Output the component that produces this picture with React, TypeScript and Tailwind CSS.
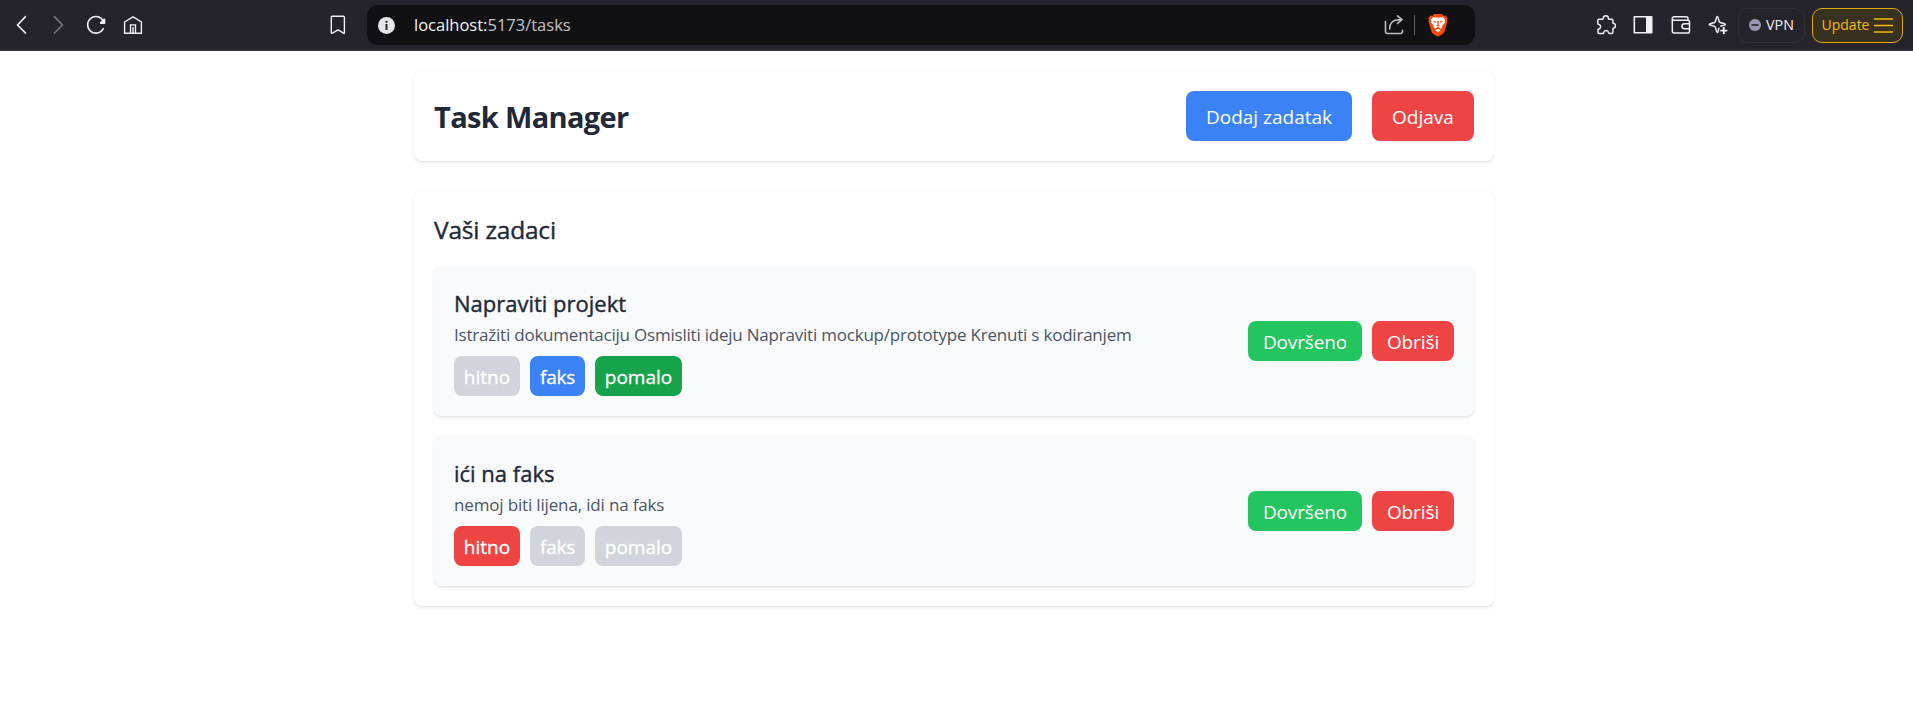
import type { ReactNode } from "react";

function Icon({ children, className = "text-[#f0f0f2]" }: { children: ReactNode; className?: string }) {
  return (
    <svg
      width="20"
      height="20"
      viewBox="0 0 20 20"
      fill="none"
      stroke="currentColor"
      strokeWidth="1.5"
      strokeLinecap="round"
      strokeLinejoin="round"
      className={`block shrink-0 ${className}`}
    >
      {children}
    </svg>
  );
}

function BraveLogo() {
  return (
    <svg width="20" height="24" viewBox="0 0 20 24" className="block shrink-0">
      <path d="M6 1h8l1.700 1.900 2-.4L19.700 5.200l-.6 1.800.4 1.300-3 10.200c-.3 1-.8 1.600-1.600 2.200L11 23.200c-.7.5-1.300.5-2 0L5.100 20.700c-.8-.6-1.300-1.200-1.600-2.200L.5 8.300.9 7 .3 5.200l2-2.700 2 .4z" fill="#fb4a0b" />
      <path d="M10 4.800l2.600-.5 2.500-.1 2.200 2.800-.6 1.200.3 1.400-3 3.300.4 1.700-2 1.200-1.300-1.500-1.100-.4-1.100.4-1.300 1.500-2-1.200.4-1.700-3-3.300.3-1.400L2.700 7l2.200-2.800 2.500.1z" fill="#fff" />
      <path d="M10 15.700l2.800 1.600-2.800 2-2.800-2z" fill="#fff" />
      <path d="M4.800 8l3.300.6-.6 1.400zM15.200 8l-3.300.6.6 1.400zM9.200 8h1.600l-.2 4 1.200.8-1.800 1-1.800-1 1.200-.8z" fill="#fb4a0b" />
    </svg>
  );
}

function BrowserBar() {
  return (
    <div className="flex h-[51px] items-center border-b border-[#38383d] bg-[#25242a]">
      <div className="flex items-center gap-[17px] pl-3">
        <Icon>
          <path d="M13.500 1.700 5.500 10l8 8" strokeWidth="1.700" />
        </Icon>
        <Icon className="text-[#77767c]">
          <path d="M5.500 1.700l8 8.300-8 8" strokeWidth="1.700" />
        </Icon>
        <Icon>
          <path d="M17.300 13.700A8.300 8.300 0 1 1 17.300 6" strokeWidth="1.600" />
          <path d="M18.300 4.500v3.500h-3.500z" fill="currentColor" strokeWidth="2" />
        </Icon>
        <Icon>
          <path d="M1.600 7 10 1.800 18.400 7v11.200H1.600zM7.500 18V9.900h5V18M10 12.500V18" strokeWidth="1.400" strokeLinejoin="miter" />
        </Icon>
      </div>
      <div className="ml-[185px]">
        <Icon>
          <path d="M4.200 1.200h11.200q1 0 1 1v15.600q0 1-.9.400L10 14.800l-5.500 3.400q-1.200.6-1.200-.4V2.200q0-1 .9-1z" strokeWidth="1.400" />
        </Icon>
      </div>
      <div className="ml-[19px] flex h-10 w-[1108px] items-center rounded-[11px] bg-[#111113] pl-[11px]">
        <svg width="17" height="17" viewBox="0 0 17 17" className="block">
          <circle cx="8.500" cy="8.500" r="8.500" fill="#e6e5ea" />
          <rect x="7.500" y="3.800" width="2" height="2" fill="#28272c" />
          <rect x="7.500" y="7" width="2" height="6" fill="#28272c" />
        </svg>
        <span className="ml-[19px] text-[16.500px] leading-6 text-[#c2c2c6]">
          <span className="text-[#f2f2f4]">localhost:</span>5173/tasks
        </span>
        <div className="ml-auto flex items-center pr-[27px]">
          <Icon className="text-[#bfbfc1]">
            <path d="M1.500 6.500v10q0 2 2 2h13q2 0 2-2v-1.200M5.700 14C5.500 8.500 8 4.600 17.500 4.600M13.500.9l4.500 3.700L13.500 8.500" strokeWidth="1.600" />
          </Icon>
          <div className="ml-[10px] h-5 w-[1.500px] bg-[#5f5f62]" />
          <div className="ml-[13px]">
            <BraveLogo />
          </div>
        </div>
      </div>
      <div className="ml-auto flex items-center pr-[10px]">
        <div className="flex items-center gap-[17.500px]">
          <Icon>
            <path d="M3 4.300h3.500q.8 0 .8-1a2.500 2.500 0 0 1 5 0q0 1 .8 1h2.600q1.200 0 1.200 1.200v2.300q0 .7.800.8a2.300 2.300 0 0 1 0 4.500q-.8.1-.8.900v3.200q0 1.200-1.200 1.200h-2.200q-.8 0-1-.9a2.400 2.400 0 0 0-4.700 0q-.2.900-1 .9H3.200q-1.200 0-1.200-1.200v-2.400q0-.7.8-.9a2.300 2.300 0 0 0 0-4.500q-1-.2-1-1V5.500Q1.800 4.300 3 4.300z" strokeWidth="1.500" />
          </Icon>
          <Icon>
            <path d="M1.300 1.800h17.400v16H1.300z" strokeWidth="1.600" />
            <path d="M13 1.800h5.700v16H13z" fill="currentColor" stroke="none" />
          </Icon>
          <Icon>
            <path d="M17 5V3.500q0-1.700-1.700-1.700H3.200Q1.300 1.800 1.300 3.600V16q0 2 2 2h13.400q1.800 0 1.800-1.800V7q0-1.700-1.800-1.700H3.200q-1.900 0-1.900-1.500M18.500 8.800h-5a2.500 2.500 0 0 0 0 5h5" />
          </Icon>
          <Icon>
            <path d="M9.300 1.500c1.200 0 1 4.300 2.300 5.600s5.800 1.200 5.800 2.300-3 1-4.600 1.700M9.300 1.500c-1.200 0-1 4.300-2.300 5.600S1.200 8.300 1.200 9.400s4.500 1 5.800 2.300 1.100 5.800 2.300 5.800 1-2.800 1.600-4.300" />
            <path d="M15.800 12.800v5.600M13 15.600h5.600" strokeWidth="1.900" />
          </Icon>
        </div>
        <div className="ml-[10px] flex h-[35px] w-[67px] items-center justify-center gap-[5px] rounded-[10px] border border-[#303035]">
          <svg width="12" height="12" viewBox="0 0 12 12" className="block">
            <circle cx="6" cy="6" r="6" fill="#9a98b1" />
            <rect x="2.500" y="5.200" width="7" height="1.600" fill="#25242a" />
          </svg>
          <span className="text-[14.300px] leading-5 text-[#f0f0f2]">VPN</span>
        </div>
        <div className="ml-[7px] flex h-[35px] w-[91px] items-center justify-center gap-[5px] rounded-[10px] border-[1.500px] border-[#dfa908] bg-[#38311f] text-[#f5bc0c]">
          <span className="text-[14px] leading-5">Update</span>
          <svg width="19" height="15" viewBox="0 0 19 15" stroke="currentColor" strokeWidth="1.300" className="block">
            <path d="M0 1h19M0 7.500h19M0 14h19" />
          </svg>
        </div>
      </div>
    </div>
  );
}

type Tag = { label: string; className: string };
type Task = { title: string; text: string; textClass: string; tags: Tag[] };

const tasks: Task[] = [
  {
    title: "Napraviti projekt",
    text: "Istražiti dokumentaciju Osmisliti ideju Napraviti mockup/prototype Krenuti s kodiranjem",
    textClass: "tracking-[-0.213px]",
    tags: [
      { label: "hitno", className: "w-[66px] bg-[#d1d5db]" },
      { label: "faks", className: "w-[55px] tracking-[-0.300px] bg-[#3b82f6]" },
      { label: "pomalo", className: "w-[87px] bg-[#16a34a]" },
    ],
  },
  {
    title: "ići na faks",
    text: "nemoj biti lijena, idi na faks",
    textClass: "tracking-[-0.160px]",
    tags: [
      { label: "hitno", className: "w-[66px] bg-[#ef4444]" },
      { label: "faks", className: "w-[55px] tracking-[-0.300px] bg-[#d1d5db]" },
      { label: "pomalo", className: "w-[87px] bg-[#d1d5db]" },
    ],
  },
];

const cardShadow = "shadow-[0_1.250px_3.750px_rgba(0,0,0,0.08),0_1.250px_2.500px_-1.250px_rgba(0,0,0,0.1)]";

function TaskCard({ task }: { task: Task }) {
  return (
    <li className={`flex h-[150px] items-center justify-between rounded-lg bg-[#f9fafb] px-5 ${cardShadow}`}>
      <div>
        <h3 className="text-[22px] leading-[35px] text-[#1f2937] [-webkit-text-stroke:0.400px_#1f2937]">{task.title}</h3>
        <p className={`pt-px text-[17px] leading-[25px] text-[#4b5563] ${task.textClass}`}>{task.text}</p>
        <div className="mt-[9px] flex gap-[10px]">
          {task.tags.map((tag) => (
            <span
              key={tag.label}
              className={`h-10 rounded-lg text-center text-[19px] leading-[42px] text-white [-webkit-text-stroke:0.300px_#fff] ${tag.className}`}
            >
              {tag.label}
            </span>
          ))}
        </div>
      </div>
      <div className="flex gap-[10px]">
        <button className="h-10 w-[114px] rounded-lg bg-[#22c55e] text-[19px] leading-[42px] tracking-[-0.150px] text-white">Dovršeno</button>
        <button className="h-10 w-[82px] rounded-lg bg-[#ef4444] text-[19px] leading-[42px] tracking-[-0.100px] text-white">Obriši</button>
      </div>
    </li>
  );
}

export default function App() {
  return (
    <div className="h-[719px] overflow-hidden bg-white font-['Open_Sans','Noto_Sans',sans-serif]">
      <BrowserBar />
      <main className="ml-[414px] w-[1080px] pt-5">
        <header className={`flex h-[90px] items-center justify-between rounded-lg bg-white px-5 ${cardShadow}`}>
          <h1 className="pt-0.5 text-[29px] leading-10 font-bold tracking-[-0.650px] text-[#1f2937]">Task Manager</h1>
          <div className="flex gap-5">
            <button className="h-[50px] w-[166px] rounded-lg bg-[#3b82f6] pt-0.5 text-[19px] text-white">Dodaj zadatak</button>
            <button className="h-[50px] w-[102px] rounded-lg bg-[#ef4444] pt-0.5 text-[19px] text-white">Odjava</button>
          </div>
        </header>
        <section className={`mt-[30px] h-[415px] rounded-lg bg-white px-5 pt-[19px] ${cardShadow}`}>
          <h2 className="text-[24.500px] leading-10 tracking-[-0.200px] text-[#1f2937] [-webkit-text-stroke:0.400px_#1f2937]">Vaši zadaci</h2>
          <ul className="mt-4 flex flex-col gap-5">
            {tasks.map((task) => (
              <TaskCard key={task.title} task={task} />
            ))}
          </ul>
        </section>
      </main>
    </div>
  );
}
